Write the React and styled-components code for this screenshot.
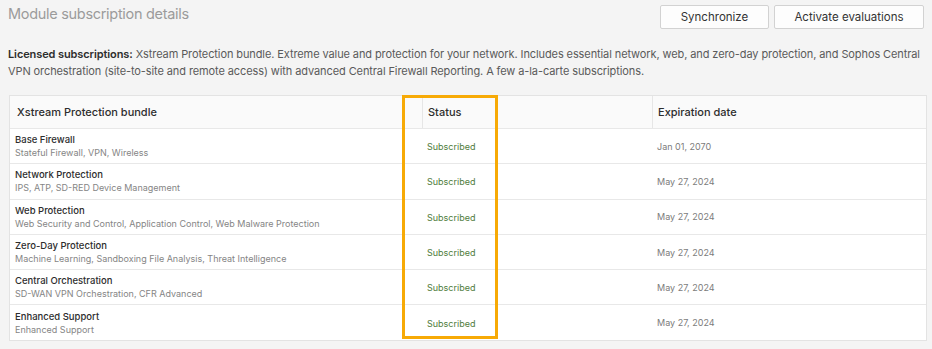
import React from "react";
import styled, { createGlobalStyle } from "styled-components";

const GlobalStyle = createGlobalStyle`
  html, body {
    margin: 0;
    padding: 0;
    background: #f4f4f4;
  }
  body {
    font-family: Inter, "Open Sans", "Liberation Sans", sans-serif;
    color: #333;
  }
  * { box-sizing: border-box; }
`;

const Page = styled.div`
  width: 932px;
  height: 349px;
  padding: 5px 7px 0 8px;
  background: #f4f4f4;
  overflow: hidden;
`;

const TopBar = styled.div`
  display: flex;
  justify-content: space-between;
  align-items: flex-start;
`;

const Title = styled.h2`
  margin: 0;
  font-size: 14.5px;
  line-height: 18px;
  font-weight: 400;
  color: #9b9b9b;
  letter-spacing: -0.3px;
`;

const Actions = styled.div`
  display: flex;
  gap: 5px;
  margin-right: 1px;
`;

const Button = styled.button`
  height: 24px;
  width: ${p => p.w}px;
  background: #fdfdfd;
  border: 1px solid #d2d2d2;
  border-radius: 2px;
  font-family: inherit;
  font-size: 11.5px;
  color: #333;
  padding: 0;
`;

const Description = styled.p`
  margin: 17px 0 0 0;
  width: 912px;
  font-size: 11px;
  line-height: 17px;
  color: #5a5a5a;
  letter-spacing: -0.1px;
`;

const Lead = styled.span`
  color: #2d2d2d;
  font-weight: 600;
  margin-right: 3px;
`;

const TableWrap = styled.div`
  position: relative;
  margin: 15px 0 0 1px;
  width: 918px;
`;

const Table = styled.div`
  border: 1px solid #e3e3e3;
  background: #fff;
`;

const Row = styled.div`
  display: grid;
  grid-template-columns: 412px 230px 1fr;
  height: ${p => (p.head ? 32 : 35.3)}px;
  background: ${p => (p.head ? "#fafafa" : "#fff")};
  border-top: ${p => (p.head ? "none" : "1.5px solid #e8e8e8")};
  align-items: stretch;
`;

const HeadCell = styled.div`
  display: flex;
  align-items: center;
  padding-left: ${p => p.pad}px;
  font-size: 11px;
  font-weight: 500;
  color: #2d2d2d;
  border-left: ${p => (p.first ? "none" : "1px solid #e6e6e6")};
`;

const Cell = styled.div`
  display: flex;
  flex-direction: column;
  justify-content: center;
  padding-left: ${p => p.pad}px;
`;

const Name = styled.div`
  font-size: 9.5px;
  line-height: 13px;
  color: #2d2d2d;
  font-weight: 500;
`;

const Sub = styled.div`
  font-size: 9px;
  line-height: 13px;
  color: #858585;
`;

const Status = styled.div`
  font-size: 9px;
  color: #4f7d3c;
  padding-top: 1px;
`;

const DateText = styled.div`
  font-size: 9px;
  color: #7c7c7c;
`;

const Highlight = styled.div`
  position: absolute;
  left: 393px;
  top: 0px;
  width: 96px;
  height: 244px;
  border: 3px solid #f7aa06;
  pointer-events: none;
`;

const modules = [
  { name: "Base Firewall", sub: "Stateful Firewall, VPN, Wireless", date: "Jan 01, 2070" },
  { name: "Network Protection", sub: "IPS, ATP, SD-RED Device Management", date: "May 27, 2024" },
  { name: "Web Protection", sub: "Web Security and Control, Application Control, Web Malware Protection", date: "May 27, 2024" },
  { name: "Zero-Day Protection", sub: "Machine Learning, Sandboxing File Analysis, Threat Intelligence", date: "May 27, 2024" },
  { name: "Central Orchestration", sub: "SD-WAN VPN Orchestration, CFR Advanced", date: "May 27, 2024" },
  { name: "Enhanced Support", sub: "Enhanced Support", date: "May 27, 2024" },
];

export default function App() {
  return (
    <Page>
      <GlobalStyle />
      <TopBar>
        <Title>Module subscription details</Title>
        <Actions>
          <Button w={109}>Synchronize</Button>
          <Button w={150}>Activate evaluations</Button>
        </Actions>
      </TopBar>

      <Description>
        <Lead>Licensed subscriptions:</Lead>Xstream Protection bundle. Extreme value and protection for your network. Includes essential network, web, and zero-day protection, and Sophos Central VPN orchestration (site-to-site and remote access) with advanced Central Firewall Reporting. A few a-la-carte subscriptions.
      </Description>

      <TableWrap>
        <Table>
          <Row head>
            <HeadCell first pad={7}>Xstream Protection bundle</HeadCell>
            <HeadCell pad={5}>Status</HeadCell>
            <HeadCell pad={5}>Expiration date</HeadCell>
          </Row>
          {modules.map(m => (
            <Row key={m.name}>
              <Cell pad={5}>
                <Name>{m.name}</Name>
                <Sub>{m.sub}</Sub>
              </Cell>
              <Cell pad={5}>
                <Status>Subscribed</Status>
              </Cell>
              <Cell pad={5}>
                <DateText>{m.date}</DateText>
              </Cell>
            </Row>
          ))}
        </Table>
        <Highlight />
      </TableWrap>
    </Page>
  );
}
